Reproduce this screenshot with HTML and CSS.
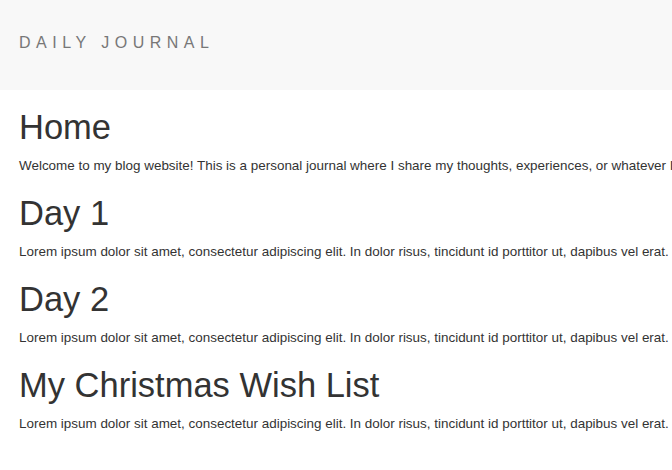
FILE: index.html
```html
<!DOCTYPE html>
<html>
<head>
<meta charset="utf-8">
<title>Daily Journal</title>
<link rel="stylesheet" href="styles.css">
</head>
<body>
<header class="navbar">
  <span class="brand">DAILY JOURNAL</span>
</header>
<main class="container">
  <section class="post">
    <h1>Home</h1>
    <p>Welcome to my blog website! This is a personal journal where I share my thoughts, experiences, or whatever I feel like writing about.</p>
  </section>
  <section class="post">
    <h1>Day 1</h1>
    <p>Lorem ipsum dolor sit amet, consectetur adipiscing elit. In dolor risus, tincidunt id porttitor ut, dapibus vel erat. Nulla facilisi.</p>
  </section>
  <section class="post">
    <h1>Day 2</h1>
    <p>Lorem ipsum dolor sit amet, consectetur adipiscing elit. In dolor risus, tincidunt id porttitor ut, dapibus vel erat. Nulla facilisi.</p>
  </section>
  <section class="post">
    <h1>My Christmas Wish List</h1>
    <p>Lorem ipsum dolor sit amet, consectetur adipiscing elit. In dolor risus, tincidunt id porttitor ut, dapibus vel erat. Nulla facilisi.</p>
  </section>
</main>
</body>
</html>
```
FILE: styles.css
```css
html, body {
  margin: 0;
  padding: 0;
  overflow: hidden;
}
body {
  font-family: "Liberation Sans", Arial, sans-serif;
  color: #333;
  background: #fff;
}
.navbar {
  background: #f8f8f8;
  height: 90px;
  display: flex;
  align-items: center;
  padding: 0 19px;
}
.brand {
  font-size: 16px;
  letter-spacing: 5.5px;
  color: #777;
  position: relative;
  top: -2px;
}
.container {
  padding: 19px 19px 0;
  white-space: nowrap;
  display: flex;
  flex-direction: column;
  gap: 19px;
}
.post h1 {
  font-size: 34.5px;
  font-weight: 500;
  line-height: 1.1;
  margin: 0 0 9px;
}
.post p {
  font-size: 13.45px;
  line-height: 20px;
  margin: 0;
}
```
